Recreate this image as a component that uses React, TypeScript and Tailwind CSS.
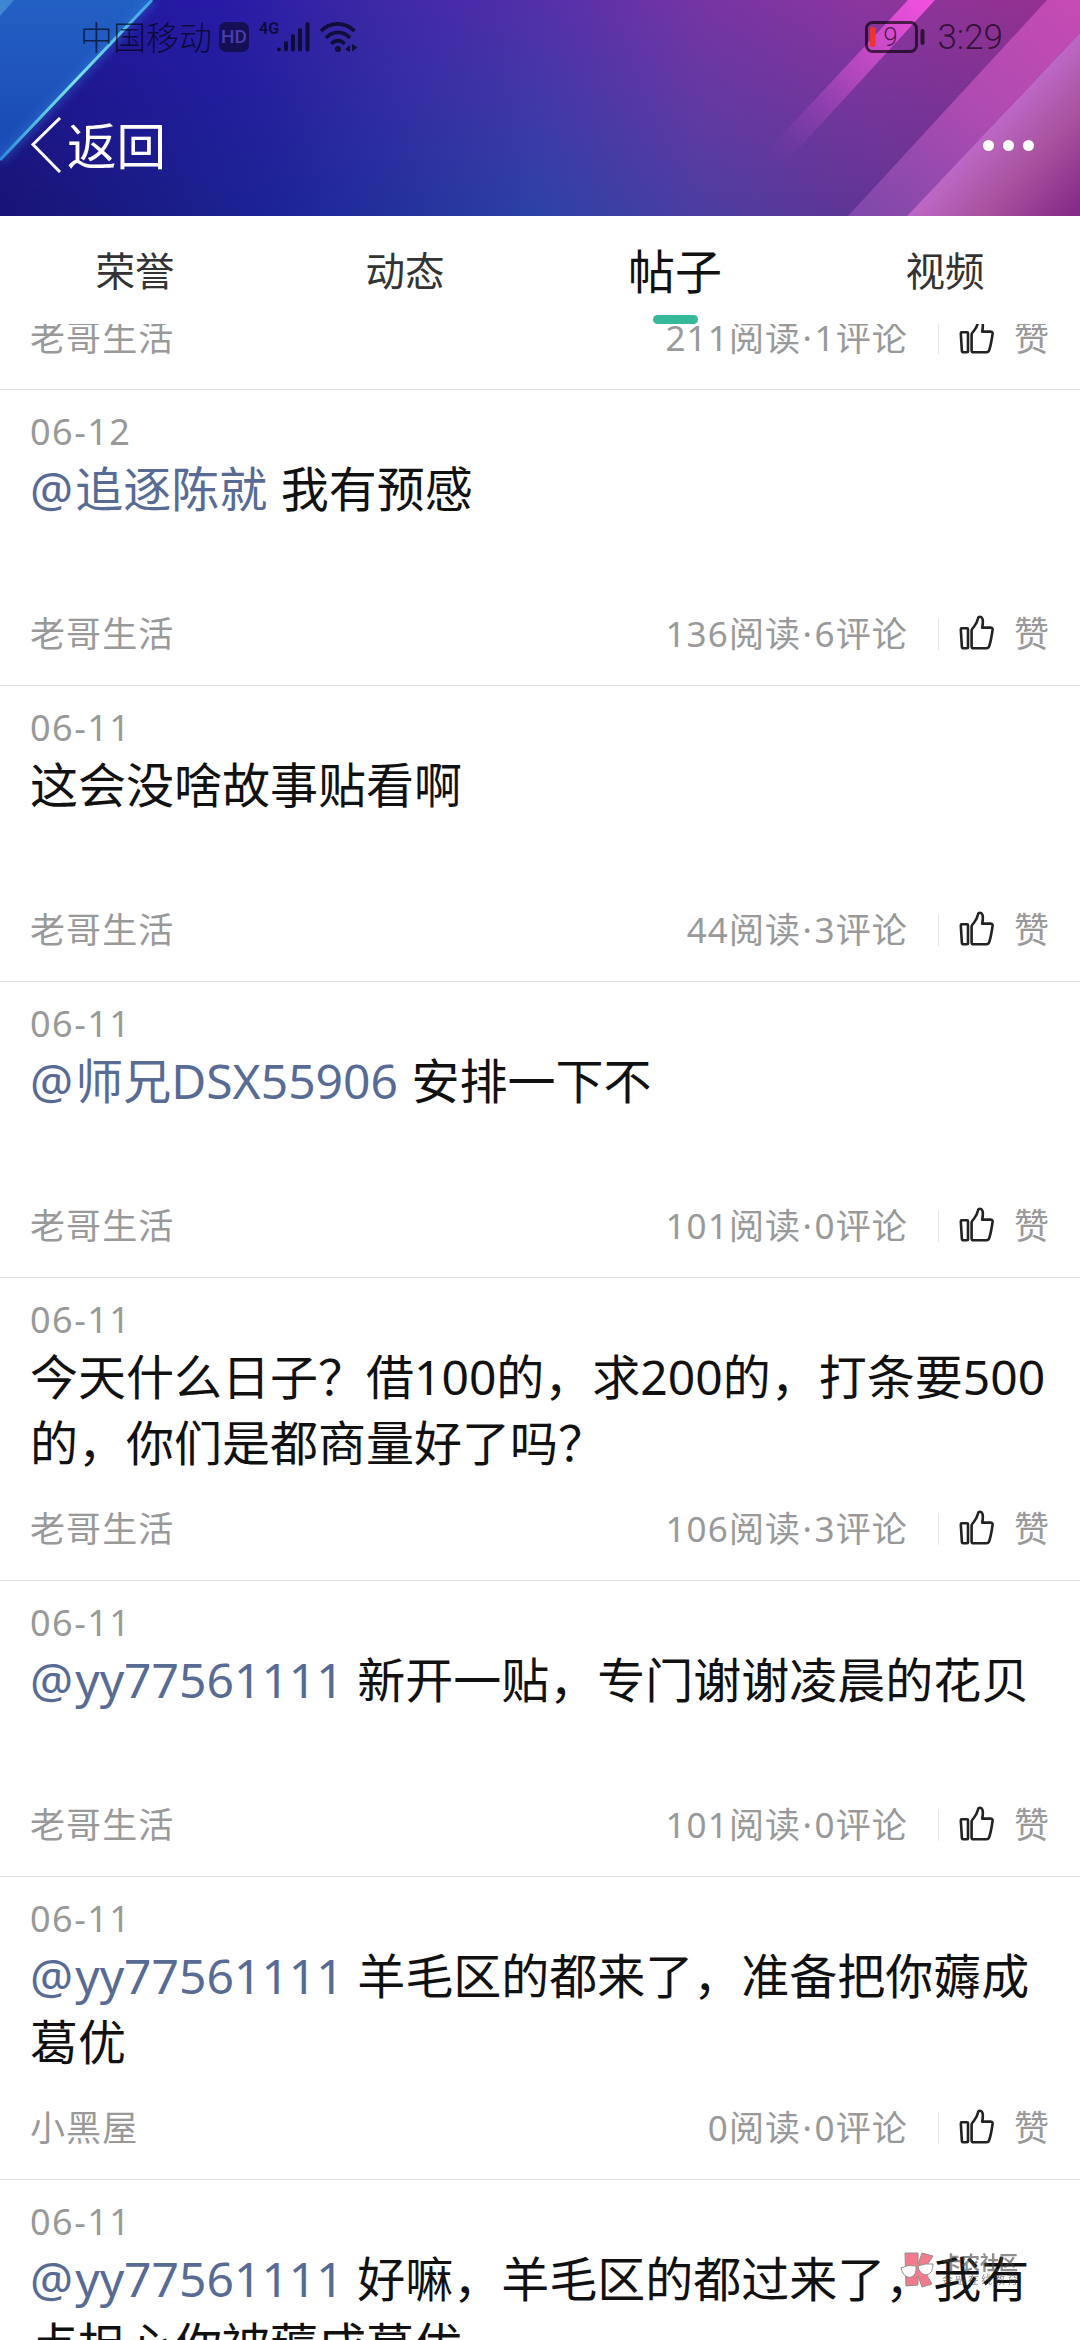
import React, { useState } from 'react';

type Post = {
  id: number;
  date?: string;
  mention?: string;
  text?: string;
  board: string;
  reads: number;
  comments: number;
};

const tabs = ['荣誉', '动态', '帖子', '视频'];

const posts: Post[] = [
  { id: 1, date: '06-12', mention: '追逐陈就', text: '我有预感', board: '老哥生活', reads: 136, comments: 6 },
  { id: 2, date: '06-11', text: '这会没啥故事贴看啊', board: '老哥生活', reads: 44, comments: 3 },
  { id: 3, date: '06-11', mention: '师兄DSX55906', text: '安排一下不', board: '老哥生活', reads: 101, comments: 0 },
  {
    id: 4,
    date: '06-11',
    text: '今天什么日子？借100的，求200的，打条要500的，你们是都商量好了吗？',
    board: '老哥生活',
    reads: 106,
    comments: 3,
  },
  { id: 5, date: '06-11', mention: 'yy77561111', text: '新开一贴，专门谢谢凌晨的花贝', board: '老哥生活', reads: 101, comments: 0 },
  { id: 6, date: '06-11', mention: 'yy77561111', text: '羊毛区的都来了，准备把你薅成葛优', board: '小黑屋', reads: 0, comments: 0 },
  { id: 7, date: '06-11', mention: 'yy77561111', text: '好嘛，羊毛区的都过来了，我有点担心你被薅成葛优', board: '小黑屋', reads: 0, comments: 0 },
];

const HeaderBackground: React.FC = () => (
  <svg className="absolute inset-0 h-full w-full" viewBox="0 0 1080 216" preserveAspectRatio="none">
    <defs>
      <linearGradient id="base" x1="0" y1="0" x2="1" y2="0">
        <stop offset="0" stopColor="#21169a" />
        <stop offset="0.2" stopColor="#271ba6" />
        <stop offset="0.34" stopColor="#3c28a6" />
        <stop offset="0.5" stopColor="#5430aa" />
        <stop offset="0.65" stopColor="#7735a4" />
        <stop offset="0.8" stopColor="#8b369e" />
        <stop offset="1" stopColor="#95308c" />
      </linearGradient>
      <linearGradient id="lower" x1="0" y1="0" x2="1" y2="0">
        <stop offset="0" stopColor="#181474" />
        <stop offset="0.25" stopColor="#1b2494" />
        <stop offset="0.5" stopColor="#2c42a6" />
        <stop offset="0.65" stopColor="#4c3ea0" />
        <stop offset="0.8" stopColor="#5f3594" />
        <stop offset="1" stopColor="#6c3092" />
      </linearGradient>
      <linearGradient id="fade" x1="0" y1="0" x2="0" y2="1">
        <stop offset="0" stopColor="#000" />
        <stop offset="1" stopColor="#fff" />
      </linearGradient>
      <mask id="lowerMask">
        <rect width="1080" height="216" fill="url(#fade)" />
      </mask>
      <linearGradient id="corner" x1="0" y1="0" x2="0" y2="1">
        <stop offset="0" stopColor="#2360c4" />
        <stop offset="1" stopColor="#1a48b4" />
      </linearGradient>
      <linearGradient id="edge" gradientUnits="userSpaceOnUse" x1="152" y1="0" x2="0" y2="160">
        <stop offset="0" stopColor="#3fa6e6" />
        <stop offset="0.5" stopColor="#7be0e6" />
        <stop offset="0.7" stopColor="#5cc8dc" />
        <stop offset="1" stopColor="#2f8ade" />
      </linearGradient>
      <linearGradient id="beam" gradientUnits="userSpaceOnUse" x1="920" y1="0" x2="772" y2="162">
        <stop offset="0" stopColor="#ee50dc" />
        <stop offset="0.45" stopColor="#b347bd" />
        <stop offset="0.75" stopColor="#8c40b0" stopOpacity="0.6" />
        <stop offset="1" stopColor="#6a3ca4" stopOpacity="0" />
      </linearGradient>
      <linearGradient id="band" gradientUnits="userSpaceOnUse" x1="1060" y1="0" x2="880" y2="216">
        <stop offset="0" stopColor="#c44bb2" />
        <stop offset="0.5" stopColor="#ad4bb2" />
        <stop offset="1" stopColor="#8249aa" />
      </linearGradient>
      <linearGradient id="right" gradientUnits="userSpaceOnUse" x1="993" y1="124" x2="1080" y2="206">
        <stop offset="0" stopColor="#bd68c6" />
        <stop offset="0.45" stopColor="#a9529f" />
        <stop offset="1" stopColor="#842b88" />
      </linearGradient>
      <filter id="glow" x="-20%" y="-20%" width="140%" height="140%">
        <feGaussianBlur stdDeviation="5" />
      </filter>
    </defs>
    <rect width="1080" height="216" fill="url(#base)" />
    <rect width="1080" height="216" fill="url(#lower)" mask="url(#lowerMask)" />
    <path d="M0 0H152L0 160Z" fill="url(#corner)" />
    <path d="M0 0H14L0 16Z" fill="#3f86d2" />
    <path d="M152 0L0 160" stroke="#2f7ad8" strokeWidth="8" opacity="0.5" filter="url(#glow)" />
    <path d="M152 0L0 160" stroke="url(#edge)" strokeWidth="3" />
    <path d="M908 0H935L765 185H735Z" fill="url(#beam)" />
    <path d="M1047 0H1080V33L907 216H848Z" fill="url(#band)" />
    <path d="M1080 33V216H907Z" fill="url(#right)" />
  </svg>
);

const StatusBar: React.FC = () => (
  <div className="relative flex h-[74px] items-center justify-between pr-[77px] pl-20 text-black/65">
    <div className="flex items-center">
      <span className="text-[33px] leading-none font-light">中国移动</span>
      <span className="ml-[7px] flex h-[30px] w-[30px] items-center justify-center rounded-[7px] bg-[#150f55] font-[Roboto] text-[19px] font-medium text-[#4a3db0]">
        HD
      </span>
      <span className="ml-2.5 self-start font-[Roboto] text-[16px] leading-none font-bold">4G</span>
      <svg className="-ml-1 h-[32px] w-[36px]" viewBox="0 0 36 32" stroke="currentColor" strokeWidth="4" strokeLinecap="round">
        <path d="M4 28.500V28.600M11 22V28.500M18 15V28.500M25 9V28.500M32.500 3V28.500" />
      </svg>
      <svg className="ml-2 h-[32px] w-[40px]" viewBox="0 0 40 32" fill="none" stroke="currentColor" strokeWidth="3.600">
        <path d="M2 10C11 .5 26 .5 35.500 10M7 17C14 9.500 24 9.500 31 17M12.500 23C16 18.500 22 18.500 25.500 23" />
        <circle cx="19" cy="28" r="3" fill="currentColor" stroke="none" />
        <path d="M31 24V31L26 28.500ZM33 23V30.500L38.500 26.500Z" fill="currentColor" stroke="none" />
      </svg>
    </div>
    <div className="flex items-center">
      <svg className="h-[32px] w-[60px]" viewBox="0 0 60 32" fill="none">
        <rect x="1.500" y="1.500" width="50" height="29" rx="6" stroke="currentColor" strokeWidth="3" />
        <rect x="5" y="6" width="5.500" height="20" rx="2" fill="#f0342c" />
        <rect x="55.500" y="8" width="4" height="16" rx="2" fill="currentColor" />
        <text x="25.500" y="25" textAnchor="middle" fontSize="26" fill="currentColor" className="font-[Roboto] font-light">
          9
        </text>
      </svg>
      <span className="ml-3 font-[Roboto] text-[35px] leading-none font-light">3:29</span>
    </div>
  </div>
);

const ThumbIcon: React.FC = () => (
  <svg
    className="h-[35px] w-[35px]"
    viewBox="0 0 35 35"
    fill="none"
    stroke="#222"
    strokeWidth="2.600"
    strokeLinejoin="round"
    strokeLinecap="round"
  >
    <path d="M2.800 13.300H8Q9 13.300 9 14.400V32.200Q9 33.200 8 33.200H4Q3 33.200 2.900 32.200L1.800 14.400Q1.800 13.300 2.800 13.300Z" />
    <path d="M12.600 15.500C12.600 13.800 13.600 13.500 14.800 12C16.900 9.400 18.300 7.200 18.900 3.800C19.300 1.100 22.500 1.200 23.400 3.600C24.400 6.300 23.800 9.500 23.200 12.600H31.800C33.500 12.600 33.800 13.900 33.500 15.500C32.700 21 32 25.600 30.300 30.800C29.700 32.600 28.900 33.200 27.400 33.200H14.400Q12.600 33.200 12.600 31.400Z" />
  </svg>
);

const PostFooter: React.FC<{ board: string; reads: number; comments: number }> = ({ board, reads, comments }) => (
  <div className="flex h-12 items-center text-[35px] leading-[48px] tracking-[1.100px] text-[#999]">
    <span>{board}</span>
    <span className="ml-auto">
      {reads}阅读<span className="mx-[1.500px]">·</span>{comments}评论
    </span>
    <span className="ml-[30px] h-8 w-px bg-[#e6e6e6]" />
    <span className="ml-5 pb-[3px]">
      <ThumbIcon />
    </span>
    <span className="ml-5">赞</span>
  </div>
);

const App: React.FC = () => {
  const [active, setActive] = useState('帖子');

  return (
    <div className="relative flex h-[2340px] w-[1080px] flex-col overflow-hidden bg-white font-['Noto_Sans','Noto_Sans_CJK_SC',sans-serif]">
      {/* Header */}
      <header className="relative h-[216px] shrink-0 overflow-hidden">
        <HeaderBackground />
        <StatusBar />
        <div className="relative flex h-[142px] items-center justify-between pr-[46px] pl-[30px] text-white">
          <button className="flex items-center">
            <svg className="h-14 w-8" viewBox="0 0 32 56" fill="none" stroke="white" strokeWidth="3">
              <path d="M30 1L3 27.500L30 55" />
            </svg>
            <span className="ml-[5px] pt-1 text-[49.500px] leading-none">返回</span>
          </button>
          <div className="flex gap-[9px]">
            <span className="h-[11px] w-[11px] rounded-full bg-white" />
            <span className="h-[11px] w-[11px] rounded-full bg-white" />
            <span className="h-[11px] w-[11px] rounded-full bg-white" />
          </div>
        </div>
      </header>

      {/* Tabs */}
      <nav className="grid h-[108px] shrink-0 grid-cols-4">
        {tabs.map((tab) => (
          <button key={tab} onClick={() => setActive(tab)} className="flex flex-col items-center">
            <span
              className={`flex h-[99px] items-center pt-3 leading-none ${
                active === tab ? 'text-[47px] text-[#111]' : 'text-[39.500px] text-[#333]'
              }`}
            >
              {tab}
            </span>
            {active === tab && <span className="h-[9px] w-[45px] rounded-full bg-[#36b99b]" />}
          </button>
        ))}
      </nav>

      {/* Post list, scrolled part way through the first item */}
      <main className="flex min-h-0 flex-1 flex-col overflow-hidden">
        <article className="flex h-[66px] shrink-0 flex-col justify-end overflow-hidden border-b border-[#dcdfe0] px-[30px] pb-[27px]">
          <PostFooter board="老哥生活" reads={211} comments={1} />
        </article>
        {posts.map((post) => (
          <article key={post.id} className="shrink-0 border-b border-[#dcdfe0] px-[30px] pt-[18px] pb-[27px]">
            <div className="h-12 text-[36px] leading-[48px] tracking-[1.500px] text-[#999]">{post.date}</div>
            <p className="mb-[29px] min-h-[125px] text-[48px] leading-[66px] break-all text-[#111]">
              {post.mention && (
                <span className="mr-px text-[#576b95]">
                  <span className="mr-[2px]">@</span>
                  {post.mention}{' '}
                </span>
              )}
              {post.text}
            </p>
            <PostFooter board={post.board} reads={post.reads} comments={post.comments} />
          </article>
        ))}
      </main>

      {/* Watermark */}
      <div className="absolute top-[2252px] left-[900px] flex opacity-60">
        <svg className="h-[36px] w-[34px]" viewBox="0 0 34 36" stroke="#444" strokeWidth="1">
          <path d="M5 1H18V12L22 1L33 4L24 18L32 32L22 35L18 24V33L6 34Z" fill="#ee2440" />
          <path d="M1 16Q8 12 16 14Q17 24 10 25.500Q3 25 1 16ZM18 14Q25 11 33 12Q33 22 26 23Q19 22 18 14Z" fill="#fff" />
        </svg>
        <div className="ml-2 flex flex-col text-[#444]">
          <span className="text-[19px] leading-[22px] font-bold">卡农社区</span>
          <span className="text-[11px] leading-[12px] tracking-[2px]">金融在线教育</span>
        </div>
      </div>
    </div>
  );
};

export default App;
